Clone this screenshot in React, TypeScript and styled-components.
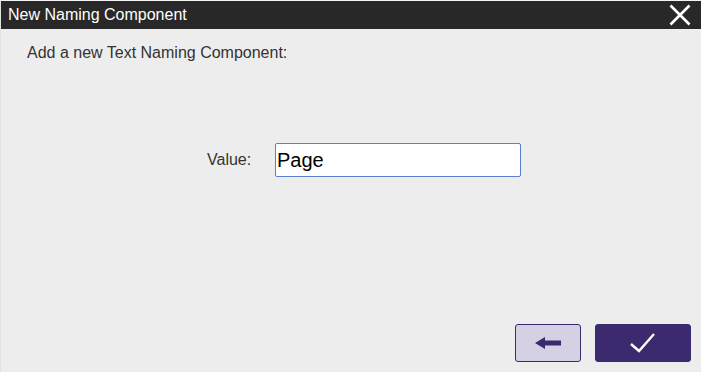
import React, { useState } from "react";
import styled, { createGlobalStyle } from "styled-components";

const GlobalStyle = createGlobalStyle`
  html, body {
    margin: 0;
    padding: 0;
    background: #ededed;
  }
  body {
    font-family: "Liberation Sans", Arial, sans-serif;
  }
`;

const Dialog = styled.div`
  width: 701px;
  height: 372px;
  box-sizing: border-box;
  display: flex;
  flex-direction: column;
  background: #ededed;
  border-left: 1px solid #e3e3e3;
  border-top: 1px solid #f4f4f4;
`;

const TitleBar = styled.div`
  height: 28px;
  background: #282828;
  display: flex;
  align-items: center;
  justify-content: space-between;
  padding: 0 9px 0 7px;
`;

const Title = styled.span`
  color: #ffffff;
  font-size: 16px;
`;

const CloseButton = styled.button`
  background: transparent;
  border: none;
  padding: 0;
  width: 24px;
  height: 24px;
  cursor: pointer;
  display: flex;
  align-items: center;
  justify-content: center;
`;

const Body = styled.div`
  flex: 1;
  display: flex;
  flex-direction: column;
  padding: 15px 10px 10px 26px;
`;

const Prompt = styled.p`
  margin: 0;
  font-size: 16px;
  color: #333333;
`;

const FieldRow = styled.div`
  display: flex;
  align-items: center;
  margin-top: 81px;
  padding-left: 180px;
`;

const Label = styled.label`
  font-size: 16px;
  color: #333333;
  width: 68px;
`;

const TextInput = styled.input`
  width: 246px;
  height: 34px;
  box-sizing: border-box;
  border: 1px solid #5a7fcf;
  border-radius: 2px;
  background: #ffffff;
  padding: 0 1px;
  font-family: "Liberation Sans", Arial, sans-serif;
  font-size: 20px;
  color: #000000;
  outline: none;
`;

const Footer = styled.div`
  margin-top: auto;
  display: flex;
  justify-content: flex-end;
  gap: 14px;
`;

const ActionButton = styled.button<{ $primary?: boolean; $width: number }>`
  width: ${(p) => p.$width}px;
  height: 38px;
  box-sizing: border-box;
  border-radius: 3px;
  border: 1px solid #3b2b6e;
  background: ${(p) => (p.$primary ? "#3b2b6e" : "#d5d0e4")};
  display: flex;
  align-items: center;
  justify-content: center;
  cursor: pointer;
  padding: 0;
`;

const App = () => {
  const [value, setValue] = useState("Page");

  return (
    <>
      <GlobalStyle />
      <Dialog>
        <TitleBar>
          <Title>New Naming Component</Title>
          <CloseButton aria-label="Close">
            <svg width="22" height="22" viewBox="0 0 22 22">
              <path d="M1.5 1.5 L20.5 20.5 M20.5 1.5 L1.5 20.5" stroke="#ffffff" strokeWidth="2.6" />
            </svg>
          </CloseButton>
        </TitleBar>
        <Body>
          <Prompt>Add a new Text Naming Component:</Prompt>
          <FieldRow>
            <Label htmlFor="value">Value:</Label>
            <TextInput id="value" value={value} onChange={(e) => setValue(e.target.value)} />
          </FieldRow>
          <Footer>
            <ActionButton $width={66} aria-label="Back">
              <svg width="28" height="14" viewBox="0 0 28 14">
                <path d="M1 7 L11 1 L11 4.5 L27 4.5 L27 9.5 L11 9.5 L11 13 Z" fill="#3b2b6e" />
              </svg>
            </ActionButton>
            <ActionButton $primary $width={96} aria-label="Confirm">
              <svg width="28" height="22" viewBox="0 0 28 22">
                <path d="M2 12 L10 19 L25 2" stroke="#ffffff" strokeWidth="2.4" fill="none" />
              </svg>
            </ActionButton>
          </Footer>
        </Body>
      </Dialog>
    </>
  );
};

export default App;
